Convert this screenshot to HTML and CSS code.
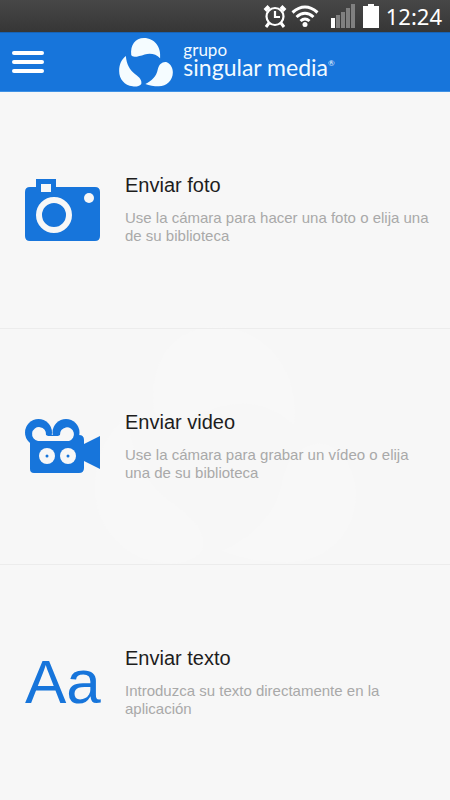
FILE: index.html
```html
<!DOCTYPE html>
<html lang="es">
<head>
<meta charset="utf-8">
<meta name="viewport" content="width=device-width, initial-scale=1">
<title>Grupo Singular Media</title>
<link rel="stylesheet" href="styles.css">
</head>
<body>
<svg class="defs" aria-hidden="true">
  <symbol id="blades" viewBox="0 0 160 146">
    <path d="M36 51C33 20 48 0 74 0C106 0 126 28 122 60C110 48 94 44 76 49C58 55 40 60 36 51Z"/>
    <path d="M20 54C22 78 31 96 48 108C62 118 68 126 66 137C60 144 49 146 40 144C16 141 0 122 0 98C0 79 8 63 20 54Z"/>
    <path d="M78 137C98 128 111 114 115 94C118 78 130 69 142 72C154 77 160 90 160 102C160 126 142 144 118 144C103 144 90 142 78 137Z"/>
  </symbol>
</svg>
<div class="status">
  <svg class="alarm" viewBox="0 0 24 24" role="img" aria-label="Alarma">
    <g fill="none" stroke="#fff" stroke-width="2.2">
      <circle cx="12" cy="12.500" r="8.500"/>
      <path d="M12 7v6h5"/>
      <path d="M2 6.500L6 2.500M22 6.500L18 2.500" stroke-width="4"/>
      <path d="M6 19l-3 4M18 19l3 4" stroke-width="3"/>
    </g>
  </svg>
  <svg class="wifi" viewBox="0 0 28 22" role="img" aria-label="Wi-Fi">
    <g fill="none" stroke="#fff" stroke-width="3">
      <path d="M1.500 7.500Q14-3.500 26.500 7.500"/>
      <path d="M5.500 12Q14 4.500 22.500 12"/>
      <path d="M9.500 16Q14 12 18.500 16"/>
    </g>
    <circle cx="14" cy="19.500" r="2.500" fill="#fff"/>
  </svg>
  <svg class="signal" viewBox="0 0 24 24" role="img" aria-label="Cobertura">
    <path fill="#fff" d="M0 14h4v10H0z"/>
    <path fill="#808080" d="M5 11h4v13H5zM10 8h4v16h-4zM15 4h4v20h-4zM20 0h4v24h-4z"/>
  </svg>
  <svg class="battery" viewBox="0 0 16 24" role="img" aria-label="Batería">
    <path fill="#fff" d="M5 0h6v2h5v22H0V2h5z"/>
  </svg>
  <time class="clock">12:24</time>
</div>
<header class="bar">
  <button class="menu" type="button" aria-label="Menú"><span></span><span></span><span></span></button>
  <div class="brand">
    <svg class="mark" aria-hidden="true"><use href="#blades"/></svg>
    <div class="name"><span class="group">grupo</span><span class="company">singular media<sup>®</sup></span></div>
  </div>
</header>
<main class="options">
  <svg class="watermark" aria-hidden="true"><use href="#blades"/></svg>
  <a class="option" href="#foto">
    <svg class="icon" viewBox="0 0 75 64" aria-hidden="true">
      <path fill="#1775db" fill-rule="evenodd" d="M11 2h20v8h39q5 0 5 5v44q0 5-5 5H5q-5 0-5-5V15q0-5 5-5h6zM16 7v8h10V7z"/>
      <circle cx="29" cy="38" r="15" fill="none" stroke="#f7f7f7" stroke-width="6"/>
      <circle cx="64" cy="21" r="5" fill="#f7f7f7"/>
    </svg>
    <div class="copy">
      <h2>Enviar foto</h2>
      <p>Use la cámara para hacer una foto o elija una de su biblioteca</p>
    </div>
  </a>
  <a class="option" href="#video">
    <svg class="icon" viewBox="0 0 75 64" aria-hidden="true">
      <g fill="#1775db">
        <circle cx="13.500" cy="18.500" r="13.500"/>
        <circle cx="41" cy="18.500" r="13.500"/>
        <path d="M20 21h34q5 0 5 5v4l16-8v33l-16-8v7q0 5-5 5H9q-4 0-4-4V26z"/>
      </g>
      <path fill="#f7f7f7" d="M13 27A7 7 0 1 1 21 21L23 22H33L35 21A7 7 0 1 1 44 27z"/>
      <g fill="#f7f7f7"><circle cx="22" cy="42" r="8"/><circle cx="43" cy="42" r="8"/></g>
      <g fill="#1775db"><circle cx="22" cy="42" r="1.500"/><circle cx="43" cy="42" r="1.500"/></g>
    </svg>
    <div class="copy">
      <h2>Enviar video</h2>
      <p>Use la cámara para grabar un vídeo o elija una de su biblioteca</p>
    </div>
  </a>
  <a class="option" href="#texto">
    <span class="icon letters" aria-hidden="true">Aa</span>
    <div class="copy">
      <h2>Enviar texto</h2>
      <p>Introduzca su texto directamente en la aplicación</p>
    </div>
  </a>
</main>
</body>
</html>
```
FILE: styles.css
```css
* { box-sizing: border-box; }

body {
  margin: 0;
  min-height: 100vh;
  display: flex;
  flex-direction: column;
  background: #f7f7f7;
  font-family: "Liberation Sans", Arial, sans-serif;
}

.defs { position: absolute; width: 0; height: 0; }

.status {
  height: 32px;
  padding: 0 8px;
  display: flex;
  align-items: center;
  justify-content: flex-end;
  background: linear-gradient(#474747, #363636);
  color: #fff;
}
.alarm { width: 24px; height: 24px; margin-right: 4px; }
.wifi { width: 28px; height: 22px; margin-right: 12px; }
.signal { width: 24px; height: 24px; margin-right: 8px; }
.battery { width: 16px; height: 24px; margin-right: 7px; }
.clock { font: 22px/32px "Noto Sans", sans-serif; }

.bar {
  height: 60px;
  padding: 0 12px;
  display: grid;
  grid-template-columns: 32px 1fr 28px;
  align-items: center;
  background: #1775db;
  border-top: 1px solid #1763b5;
  border-bottom: 1px solid #3f92e5;
}
.menu {
  display: flex;
  flex-direction: column;
  gap: 5px;
  padding: 0;
  border: 0;
  background: none;
  cursor: pointer;
}
.menu span { width: 32px; height: 4px; border-radius: 2px; background: #fff; }

.brand {
  display: flex;
  align-items: center;
  justify-content: center;
  gap: 10px;
  color: #f2faff;
}
.mark { width: 54px; height: 49px; fill: #f5fcff; }
.name {
  display: flex;
  flex-direction: column;
  font-family: Lato, sans-serif;
  padding-bottom: 8px;
}
.group { font-size: 17px; line-height: 17px; }
.company { font-size: 23px; line-height: 18px; white-space: nowrap; }
.company sup { font-size: 8px; line-height: 0; vertical-align: 10px; }

.options {
  flex: 1;
  position: relative;
  display: grid;
  grid-template-rows: repeat(3, 1fr);
}
.watermark {
  position: absolute;
  inset: 0;
  margin: auto;
  width: 58%;
  height: 36%;
  fill: #f8f8f8;
}
.option {
  position: relative;
  display: flex;
  align-items: center;
  gap: 25px;
  padding: 0 16px 2px 25px;
  color: inherit;
  text-decoration: none;
}
.option + .option { border-top: 1px solid #ececec; }
.icon { flex: none; width: 75px; height: 64px; }
.letters { color: #1775db; font-size: 62px; line-height: 64px; }
.copy { flex: 1; }
h2 {
  margin: 0 0 12px;
  color: #1d1d1d;
  font-size: 20px;
  line-height: 24px;
  font-weight: 400;
}
p {
  margin: 0;
  color: #a9a9a9;
  font-size: 15px;
  line-height: 18px;
}
```
